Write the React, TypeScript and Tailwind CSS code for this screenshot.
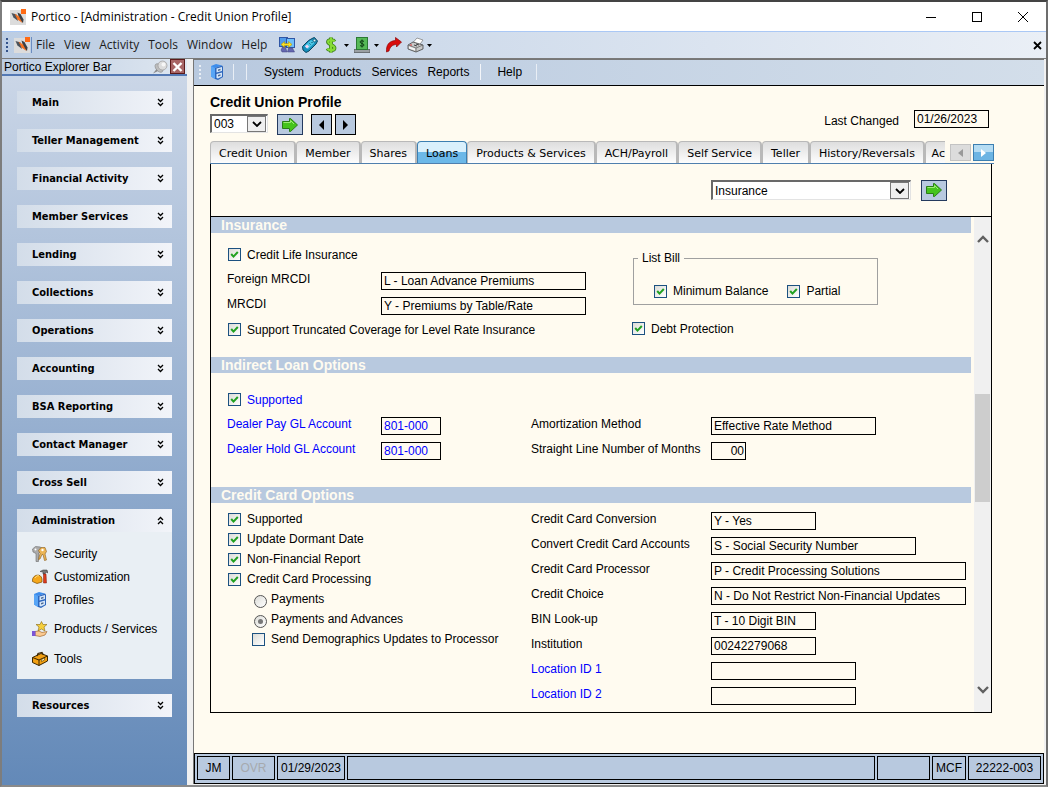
import { useState } from "react";
import type { ReactNode } from "react";

const menus = ["File", "View", "Activity", "Tools", "Window", "Help"];

const groups = [
  "Main",
  "Teller Management",
  "Financial Activity",
  "Member Services",
  "Lending",
  "Collections",
  "Operations",
  "Accounting",
  "BSA Reporting",
  "Contact Manager",
  "Cross Sell",
];

const tabs = [
  "Credit Union",
  "Member",
  "Shares",
  "Loans",
  "Products & Services",
  "ACH/Payroll",
  "Self Service",
  "Teller",
  "History/Reversals",
];

function PorticoLogo() {
  return (
    <svg viewBox="0 0 16 16" className="h-4 w-4 shrink-0">
      <rect y="1" width="16" height="15" fill="#dcdcdc" />
      <path d="M1.500 4l5 1.500L8 12 3.500 8.500z" fill="#4a525b" />
      <path d="M7.500 3.500l3 1.500 3 5.500-.5 3.500-3.500-3.500z" fill="#3a3f45" />
      <path d="M4.500 4.500l4.500 3 3.500 6.500-5-3.500z" fill="#f4701f" />
      <rect x="11" width="5" height="5" fill="#ff6a13" />
    </svg>
  );
}

function NetworkIcon() {
  return (
    <svg viewBox="0 0 16 16" className="h-4 w-4">
      <rect x=".5" y=".5" width="8" height="9" fill="#4f9bea" stroke="#2f56a5" />
      <rect x="7.500" y="1.500" width="8" height="9" fill="#6fc0fb" stroke="#2f56a5" />
      <path d="M2 13l1.500-3h3L8 15H3zM8.500 15l1-4h4l2 4z" fill="#6468b0" stroke="#3c3f7d" strokeWidth=".5" />
      <path d="M2 7.500L5.500 4.500v2h4v-2L13 7.500l-3.500 3v-2h-4v2z" fill="#ffe11f" stroke="#a68a00" strokeWidth=".5" />
    </svg>
  );
}

function TagIcon() {
  return (
    <svg viewBox="0 0 16 16" className="h-4 w-4">
      <path d="M.5 9.500l6-6L11 1l1.500-.5L15.500 4 14 7l-7 7-3 1.500L1 13z" fill="#1590bd" stroke="#0c4663" />
      <path d="M2.500 9L9 3l3.500 3L6 12z" fill="#4cc6e4" />
      <circle cx="12.500" cy="3.500" r="1.300" fill="#d9f4fb" stroke="#0c4663" strokeWidth=".6" />
      <path d="M3 9.500l2-2 2 2-2 2z" fill="#f7d5f2" />
      <path d="M7.500 6.500l1 1M9.500 5l1 1" stroke="#0c4663" />
    </svg>
  );
}

function DollarIcon() {
  return (
    <svg viewBox="0 0 12 16" className="h-4 w-3">
      <path d="M9.500 4.500C8.500 2.500 3 2.500 3 5s6.500 3 6.500 6-6 2.500-7 .5M6 .5v15" fill="none" stroke="#3c7d1a" strokeWidth="3.800" />
      <path d="M9.500 4.500C8.500 2.500 3 2.500 3 5s6.500 3 6.500 6-6 2.500-7 .5M6 .5v15" fill="none" stroke="#86dc35" strokeWidth="2.200" />
    </svg>
  );
}

function CashIcon() {
  return (
    <svg viewBox="0 0 16 16" className="h-4 w-4">
      <path d="M0 12.500h16v3H0z" fill="#9a9fa3" stroke="#4c5053" strokeWidth=".7" />
      <rect x="2.500" y=".5" width="11" height="12" fill="#55b957" stroke="#2b7a34" />
      <path d="M10 4.500C9 3.500 6 3.500 6 5s4 1.500 4 3-3 1.500-4 .5M8 2.500v8" fill="none" stroke="#0b3a12" />
    </svg>
  );
}

function RedArrowIcon() {
  return (
    <svg viewBox="0 0 16 16" className="h-4 w-4">
      <path d="M.5 15C0 8 3 4 9.500 3.500V.5L15.500 5l-5 5V7.500C6.500 7.500 4 10 3 14z" fill="#d90b0b" stroke="#8c0707" strokeWidth=".7" />
    </svg>
  );
}

function PrinterIcon() {
  return (
    <svg viewBox="0 0 17 16" className="h-4 w-[17px]">
      <path d="M6 5.500l4-4.500 6 2-3.500 5z" fill="#fff" stroke="#777" strokeWidth=".7" />
      <path d="M1 8l5-3 10 3v4l-7 3-8-3z" fill="#c9c9c9" stroke="#444" strokeWidth=".8" />
      <path d="M1 8l8 3 7-3M9 11v4" fill="none" stroke="#666" strokeWidth=".8" />
      <path d="M2 9.500l6 2v2l-6-2z" fill="#f5f5f5" />
      <path d="M7 8l3 1M9 7l3 1" stroke="#444" />
      <circle cx="4" cy="8" r=".8" fill="#d22" />
    </svg>
  );
}

function CabinetIcon() {
  return (
    <svg viewBox="0 0 16 16" className="h-4 w-4 shrink-0">
      <path d="M2 2l5-2 6 1.500L6 4v11l-4-2.500z" fill="#3c8ceb" />
      <path d="M6 4l7-2.500 1 1V13l-5 3-3-1z" fill="#2c66bd" />
      <path d="M2 2l4 2v11l-4-2.500z" fill="#57a5f6" />
      <path d="M7.500 4.500L13 3v4l-5.500 1.500zM7.500 10L13 8.500v4L9 14.500 7.500 14z" fill="#d5e6f8" />
      <path d="M9 5.500l2.500-.7v1.500L9 7zM9 11l2.500-.7v1.500L9 12.500z" fill="#4d6a95" />
    </svg>
  );
}

function KeysIcon() {
  return (
    <svg viewBox="0 0 16 16" className="h-4 w-4 shrink-0">
      <path d="M.5 3l3-2.500 5 .5 1 4-3 2v8.500H4V7.500L1 6z" fill="#ababab" stroke="#6c6c6c" strokeWidth=".6" />
      <path d="M6.500 4.500l2.500-3h4l1.500 4L13 8l1.500 6-2 .5-1.500-6h-1l-2 4.500-1.500.5 1.500-6z" fill="#ebb556" stroke="#8a5a17" strokeWidth=".6" />
      <circle cx="10.500" cy="4" r="1.200" fill="#fff" />
      <circle cx="3.500" cy="3.500" r="1" fill="#fff" />
    </svg>
  );
}

function HardHatIcon() {
  return (
    <svg viewBox="0 0 16 16" className="h-4 w-4 shrink-0">
      <path d="M8 2.500L11 1h4l1 3-2-1-1 2h-2V3z" fill="#777" stroke="#333" strokeWidth=".5" />
      <path d="M11.500 5h2.500l.5 9h-3z" fill="#dd3a1b" stroke="#7d1b0a" strokeWidth=".5" />
      <path d="M.5 11c0-5 8.500-7.500 9.500-1v3l-5 1.500-4.500-2z" fill="#f5a81c" stroke="#7a4a00" strokeWidth=".7" />
      <path d="M3 9c1-2 3-3 4-2" fill="none" stroke="#ffe28a" />
    </svg>
  );
}

function StarHandIcon() {
  return (
    <svg viewBox="0 0 16 16" className="h-4 w-4 shrink-0">
      <path d="M9.500.5L11 3.500h4l-3 2.500 1 4-3.500-2L6 10l1-4-3-2.500h4z" fill="#f6cf3c" stroke="#8a6a12" strokeWidth=".6" />
      <path d="M3 10.500L7 10l3 1.500 5-1L13 14l-5 1.500-5-1z" fill="#fbc98f" stroke="#96591b" strokeWidth=".6" />
      <rect y="10" width="3.500" height="5" fill="#7b55d6" />
    </svg>
  );
}

function ToolboxIcon() {
  return (
    <svg viewBox="0 0 16 16" className="h-4 w-4 shrink-0">
      <path d="M.5 6.500L9 2.500 15.500 5v5L7 14.500l-6.500-3z" fill="#f2a012" stroke="#3c2600" />
      <path d="M.5 6.500L7 9l8.500-4M7 9v5.500" fill="none" stroke="#3c2600" />
      <path d="M5 5l1-2.500 4-1L11.500 4" fill="none" stroke="#3c2600" strokeWidth="1.200" />
      <path d="M9.500 8.500l3-1.500v2l-3 1.500z" fill="#fff0a8" stroke="#3c2600" strokeWidth=".5" />
    </svg>
  );
}

function PinIcon() {
  return (
    <svg viewBox="0 0 15 14" className="h-3.5 w-[15px]">
      <path d="M0 13.500L4 8.500l2 2z" fill="#888" />
      <ellipse cx="6" cy="8" rx="3" ry="5" transform="rotate(-40 6 8)" fill="#bdbdbd" stroke="#888" strokeWidth=".6" />
      <circle cx="9.500" cy="5.500" r="4.500" fill="#dcdcdc" stroke="#999" strokeWidth=".7" />
      <circle cx="10.500" cy="4.500" r="2" fill="#f6f6f6" />
    </svg>
  );
}

function Chevrons({ up = false }: { up?: boolean }) {
  return (
    <svg viewBox="0 0 7 9" className="h-[9px] w-[7px]">
      {up ? (
        <path d="M1 4l2.500-2.500L6 4M1 8l2.500-2.500L6 8" fill="none" stroke="#000" strokeWidth="1.300" />
      ) : (
        <path d="M1 1l2.500 2.500L6 1M1 5l2.500 2.500L6 5" fill="none" stroke="#000" strokeWidth="1.300" />
      )}
    </svg>
  );
}

function Caret() {
  return (
    <svg viewBox="0 0 5 3" className="h-[3px] w-[5px]">
      <path d="M0 0h5L2.500 3z" fill="#000" />
    </svg>
  );
}

function GoButton({ label }: { label: string }) {
  return (
    <button
      aria-label={label}
      className="flex h-[21px] w-[26px] items-center justify-center border border-[#243a5e] bg-[#b8c9df]"
    >
      <svg viewBox="0 0 16 14" className="h-3.5 w-4">
        <path d="M.5 3.500h7v-3h1L15.500 7l-7 6.500h-1v-3h-7z" fill="#45c41c" stroke="#2a7d17" />
        <path d="M1.500 4.500h7v-2L12 6" fill="none" stroke="#9cec74" />
      </svg>
    </button>
  );
}

function Dropdown({ label, options, className }: { label: string; options: string[]; className: string }) {
  return (
    <span className={"grid border-t-2 border-l-2 border-r border-b border-t-[#696969] border-l-[#696969] border-r-[#e3e3e3] border-b-[#e3e3e3] bg-white " + className}>
      <select aria-label={label} className="appearance-none bg-white px-0.5 text-black outline-none [grid-area:1/1]">
        {options.map((o) => (
          <option key={o}>{o}</option>
        ))}
      </select>
      <span className="pointer-events-none mr-px flex w-[19px] items-center justify-center justify-self-end border border-[#777] bg-[#efefef] [grid-area:1/1]">
        <svg viewBox="0 0 10 6" className="h-1.5 w-2.5">
          <path d="M1 1l4 4 4-4" fill="none" stroke="#000" strokeWidth="1.800" />
        </svg>
      </span>
    </span>
  );
}

function Check({ label, checked = true, blue = false }: { label: string; checked?: boolean; blue?: boolean }) {
  return (
    <label className={blue ? "flex items-center gap-1.5 text-[#0000ff]" : "flex items-center gap-1.5"}>
      <span className="grid place-items-center">
        <input
          type="checkbox"
          defaultChecked={checked}
          className="peer h-[13px] w-[13px] appearance-none border border-[#1c5180] bg-linear-to-br from-[#dcdcd7] to-white [grid-area:1/1]"
        />
        <svg viewBox="0 0 9 9" className="pointer-events-none hidden h-[9px] w-[9px] [grid-area:1/1] peer-checked:block">
          <path d="M1.200 4l2.300 2.600L7.800 2" fill="none" stroke="#21a121" strokeWidth="2" />
        </svg>
      </span>
      {label}
    </label>
  );
}

function Radio({ label, checked = false }: { label: string; checked?: boolean }) {
  return (
    <label className="flex h-5 items-center gap-1">
      <span className="grid place-items-center pt-1">
        <input
          type="radio"
          name="processing"
          defaultChecked={checked}
          className="peer h-[13px] w-[13px] appearance-none rounded-full border border-[#555] bg-linear-to-br from-[#dcdcd7] to-white [grid-area:1/1]"
        />
        <span className="pointer-events-none hidden h-[5px] w-[5px] rounded-full bg-[#777] [grid-area:1/1] peer-checked:block" />
      </span>
      {label}
    </label>
  );
}

type FieldProps = {
  label: string;
  value?: string;
  labelWidth: string;
  width: string;
  blue?: boolean;
  right?: boolean;
};

function Field({ label, value = "", labelWidth, width, blue = false, right = false }: FieldProps) {
  return (
    <label className={"flex h-[25px] items-start " + (blue ? "text-[#0000ff]" : "text-black")}>
      <span className={"shrink-0 leading-6 " + labelWidth}>{label}</span>
      <input
        readOnly
        defaultValue={value}
        className={"mt-[5px] h-[18px] border border-black bg-[#fffbf0] outline-none " + width + (right ? " pr-px text-right" : " px-0.5")}
      />
    </label>
  );
}

function SectionTitle({ children }: { children: ReactNode }) {
  return (
    <h2 className="h-4 bg-[#b8c9df] pl-2.5 text-[14px] leading-4 font-bold text-[#fffbf0]">{children}</h2>
  );
}

function GroupHeader({ name, open = false }: { name: string; open?: boolean }) {
  return (
    <button className="flex h-[23px] w-full items-center justify-between bg-linear-to-r from-[#d3dde9] to-[#f2f4f9] pr-2 pl-[15px] font-['DejaVu_Sans_Condensed','DejaVu_Sans',sans-serif] text-[11px] font-bold">
      {name}
      <Chevrons up={open} />
    </button>
  );
}

function AdminLink({ icon, name }: { icon: ReactNode; name: string }) {
  return (
    <a href="#" className="flex h-[23px] items-center gap-1.5 whitespace-nowrap">
      {icon}
      {name}
    </a>
  );
}

function TitleBar() {
  return (
    <header className="flex h-[30px] items-center border-b border-[#aac8f5] bg-white pr-4 pl-2 font-['Open_Sans',sans-serif] text-[12px]">
      <PorticoLogo />
      <h1 className="ml-[5px]">Portico - [Administration - Credit Union Profile]</h1>
      <div className="ml-auto flex items-center gap-8">
        <button aria-label="Minimize">
          <svg viewBox="0 0 14 12" className="h-3 w-3.5">
            <path d="M2 6.500h10" stroke="#000" />
          </svg>
        </button>
        <button aria-label="Maximize">
          <svg viewBox="0 0 14 12" className="h-3 w-3.5">
            <rect x="2.500" y="1.500" width="9" height="9" fill="none" stroke="#000" />
          </svg>
        </button>
        <button aria-label="Close">
          <svg viewBox="0 0 14 12" className="h-3 w-3.5">
            <path d="M2 1l10 10M12 1L2 11" stroke="#000" />
          </svg>
        </button>
      </div>
    </header>
  );
}

function MenuBar() {
  return (
    <nav className="flex h-[27px] items-center border-b border-[#7a7a7a] bg-linear-to-r from-[#bccde3] to-[#eaeff6] pl-1">
      <span className="h-3.5 border-l-2 border-dotted border-[#33528a]" />
      <span className="ml-1.5 flex border-r border-[#6b8cc0] pr-px">
        <PorticoLogo />
      </span>
      <div className="ml-1 flex gap-[9px] font-['Open_Sans',sans-serif] text-[12px] text-[#1c1c1c]">
        {menus.map((m) => (
          <button key={m}>{m}</button>
        ))}
      </div>
      <div className="ml-3 flex items-center gap-[7px]">
        <button aria-label="Network">
          <NetworkIcon />
        </button>
        <button aria-label="Tag">
          <TagIcon />
        </button>
        <button aria-label="Money" className="flex items-center gap-[7px]">
          <DollarIcon />
          <Caret />
        </button>
        <button aria-label="Cash" className="-ml-0.5 flex items-center gap-1">
          <CashIcon />
          <Caret />
        </button>
        <button aria-label="Forward">
          <RedArrowIcon />
        </button>
        <button aria-label="Print" className="-ml-0.5 flex items-center gap-[3px]">
          <PrinterIcon />
          <Caret />
        </button>
      </div>
      <button aria-label="Close document" className="mr-1 ml-auto">
        <svg viewBox="0 0 9 9" className="h-[9px] w-[9px]">
          <path d="M1 1l7 7M8 1L1 8" stroke="#000" strokeWidth="1.800" />
        </svg>
      </button>
    </nav>
  );
}

function ExplorerBar() {
  return (
    <aside className="flex w-[185px] shrink-0 flex-col bg-linear-to-b from-[#cdd8e8] to-[#6389b8]">
      <div className="flex h-[17px] items-center border-b-2 border-[#5479b4] bg-linear-to-r from-[#bccde3] to-[#dfe7f0] pl-0.5">
        <span>Portico Explorer Bar</span>
        <button aria-label="Pin" className="ml-auto">
          <PinIcon />
        </button>
        <button aria-label="Close explorer" className="mr-0.5 ml-0.5 flex h-[15px] w-[15px] items-center justify-center border border-[#5c1a1a] bg-[#a86565]">
          <svg viewBox="0 0 11 10" className="h-2.5 w-[11px]">
            <path d="M1.500 1l8 8M9.500 1l-8 8" stroke="#fff" strokeWidth="2.400" />
          </svg>
        </button>
      </div>
      <div className="flex flex-col gap-[15px] px-[15px] pt-[15px]">
        {groups.map((g) => (
          <GroupHeader key={g} name={g} />
        ))}
        <section className="bg-[#e9eff4]">
          <GroupHeader name="Administration" open />
          <div className="flex flex-col px-[15px] pt-2.5 pb-[9px]">
            <AdminLink icon={<KeysIcon />} name="Security" />
            <AdminLink icon={<HardHatIcon />} name="Customization" />
            <AdminLink icon={<CabinetIcon />} name="Profiles" />
            <div className="mt-1.5 flex flex-col gap-[7px]">
              <AdminLink icon={<StarHandIcon />} name="Products / Services" />
              <AdminLink icon={<ToolboxIcon />} name="Tools" />
            </div>
          </div>
        </section>
        <GroupHeader name="Resources" />
      </div>
    </aside>
  );
}

function Toolbar() {
  return (
    <nav className="flex h-[26px] shrink-0 items-center border-b border-black bg-linear-to-r from-[#b8c9df] to-[#d3deea] pb-0.5 pl-[5px]">
      <span className="h-3.5 border-l-2 border-dotted border-[#e9eef5]" />
      <button aria-label="Profiles" className="ml-2">
        <CabinetIcon />
      </button>
      <span className="ml-2 h-4 border-l border-[#e9eef5]" />
      <span className="ml-3 h-4 border-l border-[#e9eef5]" />
      <div className="ml-[17px] flex gap-2.5">
        <button>System</button>
        <button>Products</button>
        <button>Services</button>
        <button>Reports</button>
      </div>
      <span className="ml-[11px] h-4 border-l border-[#f4f6fa]" />
      <button className="ml-4">Help</button>
      <span className="ml-3.5 h-4 border-l border-[#e9eef5]" />
    </nav>
  );
}

function ProfileHeader() {
  return (
    <div className="flex items-start justify-between pt-[7px] pr-[3px]">
      <div>
        <h2 className="text-[14px] leading-[18px] font-bold">Credit Union Profile</h2>
        <div className="mt-[3px] flex items-start">
          <Dropdown label="Profile number" options={["003"]} className="h-[19px] w-[58px]" />
          <span className="ml-[9px] flex">
            <GoButton label="Load profile" />
          </span>
          <button aria-label="Previous" className="ml-2 flex h-[21px] w-[21px] items-center justify-center border border-black bg-[#b8c9df]">
            <svg viewBox="0 0 5 10" className="h-2.5 w-[5px]">
              <path d="M5 0v10L0 5z" />
            </svg>
          </button>
          <button aria-label="Next" className="ml-[3px] flex h-[21px] w-[21px] items-center justify-center border border-black bg-[#b8c9df]">
            <svg viewBox="0 0 5 10" className="h-2.5 w-[5px]">
              <path d="M0 0v10l5-5z" />
            </svg>
          </button>
        </div>
      </div>
      <label className="flex pt-[17px]">
        <span className="pt-0.5 leading-[18px]">Last Changed</span>
        <input readOnly defaultValue="01/26/2023" className="ml-[15px] h-[18px] w-[75px] border border-black bg-[#fffbf0] px-0.5 outline-none" />
      </label>
    </div>
  );
}

function TabStrip() {
  const [active, setActive] = useState("Loans");

  return (
    <div className="mt-1.5 -mr-0.5 flex items-end border-b border-[#4f7fae]">
      <div className="flex h-[22px] min-w-0 flex-1 font-['DejaVu_Sans',sans-serif] text-[11px]">
        {tabs.map((t) => (
          <button
            key={t}
            onClick={() => setActive(t)}
            className={
              t === active
                ? "shrink-0 rounded-t-[4px] border border-b-0 border-[#3c7fb1] bg-linear-to-b from-[#d9f0fc] from-50% to-[#6cb8e8] to-50% px-2 pt-0.5"
                : "shrink-0 rounded-t-[4px] border border-r-2 border-b-0 border-[#b9b9b9] bg-linear-to-b from-[#dedede] to-[#fdfdfd] px-2 pt-0.5 first:pr-[7px]"
            }
          >
            {t}
          </button>
        ))}
        <button className="min-w-0 flex-1 rounded-tl-[4px] border-t border-l border-[#b9b9b9] bg-linear-to-b from-[#dedede] to-[#fdfdfd] pt-0.5 text-right">
          Ac
        </button>
      </div>
      <div className="mb-0.5 ml-[5px] flex gap-0.5">
        <button aria-label="Scroll tabs left" className="flex h-[17px] w-[21px] items-center justify-center border border-[#c3c3c3] bg-[#dcdcdc]">
          <svg viewBox="0 0 5 8" className="h-2 w-[5px]">
            <path d="M5 0v8L0 4z" fill="#999" />
          </svg>
        </button>
        <button aria-label="Scroll tabs right" className="flex h-[17px] w-[21px] items-center justify-center border border-[#3c7fb1] bg-linear-to-b from-[#b5dcf3] from-50% to-[#6cb4e3] to-50%">
          <svg viewBox="0 0 5 8" className="h-2 w-[5px]">
            <path d="M0 0v8l5-4z" fill="#fff" />
          </svg>
        </button>
      </div>
    </div>
  );
}

function InsuranceSection() {
  return (
    <section>
      <SectionTitle>Insurance</SectionTitle>
      <div className="flex pt-[9px] pb-[15px] pl-4">
        <div className="w-[405px] shrink-0">
          <div className="flex h-[25px] pl-px">
            <Check label="Credit Life Insurance" />
          </div>
          <Field label="Foreign MRCDI" value="L - Loan Advance Premiums" labelWidth="w-[154px]" width="w-[205px]" />
          <Field label="MRCDI" value="Y - Premiums by Table/Rate" labelWidth="w-[154px]" width="w-[205px]" />
          <div className="flex h-[25px] pl-px">
            <Check label="Support Truncated Coverage for Level Rate Insurance" />
          </div>
        </div>
        <div className="pt-2">
          <fieldset className="ml-px h-[55px] w-[245px] border border-[#a0a0a0] pl-5">
            <legend className="-ml-4 px-1 leading-4">List Bill</legend>
            <div className="flex gap-[19px] pt-[17px]">
              <Check label="Minimum Balance" />
              <Check label="Partial" />
            </div>
          </fieldset>
          <div className="mt-[11px] flex h-[25px]">
            <Check label="Debt Protection" />
          </div>
        </div>
      </div>
    </section>
  );
}

function IndirectLoanSection() {
  return (
    <section>
      <SectionTitle>Indirect Loan Options</SectionTitle>
      <div className="flex pt-3.5 pb-[25px] pl-4">
        <div className="w-[304px] shrink-0">
          <div className="flex h-[25px] pl-px">
            <Check label="Supported" blue />
          </div>
          <Field label="Dealer Pay GL Account" value="801-000" labelWidth="w-[154px]" width="w-[60px]" blue />
          <Field label="Dealer Hold GL Account" value="801-000" labelWidth="w-[154px]" width="w-[60px]" blue />
        </div>
        <div className="pt-[25px]">
          <Field label="Amortization Method" value="Effective Rate Method" labelWidth="w-[180px]" width="w-[165px]" />
          <Field label="Straight Line Number of Months" value="00" labelWidth="w-[180px]" width="w-[35px]" right />
        </div>
      </div>
    </section>
  );
}

function CreditCardSection() {
  return (
    <section>
      <SectionTitle>Credit Card Options</SectionTitle>
      <div className="flex pt-1 pb-[5px] pl-4">
        <div className="flex w-[304px] shrink-0 flex-col pt-0.5 pl-px">
          <div className="flex h-5">
            <Check label="Supported" />
          </div>
          <div className="flex h-5">
            <Check label="Update Dormant Date" />
          </div>
          <div className="flex h-5">
            <Check label="Non-Financial Report" />
          </div>
          <div className="flex h-5">
            <Check label="Credit Card Processing" />
          </div>
          <div className="pl-[26px]">
            <Radio label="Payments" />
            <Radio label="Payments and Advances" checked />
          </div>
          <div className="flex h-5 pl-6">
            <Check label="Send Demographics Updates to Processor" checked={false} />
          </div>
        </div>
        <div>
          <Field label="Credit Card Conversion" value="Y - Yes" labelWidth="w-[180px]" width="w-[105px]" />
          <Field label="Convert Credit Card Accounts" value="S - Social Security Number" labelWidth="w-[180px]" width="w-[205px]" />
          <Field label="Credit Card Processor" value="P - Credit Processing Solutions" labelWidth="w-[180px]" width="w-[255px]" />
          <Field label="Credit Choice" value="N - Do Not Restrict Non-Financial Updates" labelWidth="w-[180px]" width="w-[255px]" />
          <Field label="BIN Look-up" value="T - 10 Digit BIN" labelWidth="w-[180px]" width="w-[105px]" />
          <Field label="Institution" value="00242279068" labelWidth="w-[180px]" width="w-[105px]" />
          <Field label="Location ID 1" labelWidth="w-[180px]" width="w-[145px]" blue />
          <Field label="Location ID 2" labelWidth="w-[180px]" width="w-[145px]" blue />
        </div>
      </div>
    </section>
  );
}

function ScrollBar() {
  return (
    <div className="flex w-[17px] flex-col items-stretch bg-[#f0f0f0] px-px py-4">
      <button aria-label="Scroll up" className="flex h-3 items-center justify-center">
        <svg viewBox="0 0 12 8" className="h-2 w-3">
          <path d="M1 7l5-5 5 5" fill="none" stroke="#606060" strokeWidth="2.400" />
        </svg>
      </button>
      <span className="grow-[149]" />
      <button aria-label="Scroll thumb" className="grow-[109] bg-[#cdcdcd]" />
      <span className="grow-[182]" />
      <button aria-label="Scroll down" className="flex h-3 items-center justify-center">
        <svg viewBox="0 0 12 8" className="h-2 w-3">
          <path d="M1 1l5 5 5-5" fill="none" stroke="#606060" strokeWidth="2.400" />
        </svg>
      </button>
    </div>
  );
}

function StatusBar() {
  return (
    <footer className="flex h-[31px] shrink-0 gap-[2px] border border-black bg-[#b8c9df] p-0.5 pb-[3px]">
      <span className="flex w-[33px] items-center justify-center border border-black">JM</span>
      <span className="flex w-[43px] items-center justify-center border border-black text-[#a6a9ae]">OVR</span>
      <span className="flex w-[68px] items-center justify-center border border-black">01/29/2023</span>
      <span className="flex-1 border border-black" />
      <span className="w-[53px] border border-black" />
      <span className="flex w-[34px] items-center justify-center border border-black">MCF</span>
      <span className="flex w-[73px] items-center justify-center border border-black">22222-003</span>
    </footer>
  );
}

export default function App() {
  return (
    <div className="flex min-h-screen flex-col border-t-2 border-r-2 border-b-2 border-l-2 border-t-[#444] border-r-[#6d6d6d] border-b-[#8a8a8a] border-l-[#7d7d7d] bg-[#f0f0f0] font-['Liberation_Sans',Arial,sans-serif] text-[12px] leading-4 text-black">
      <TitleBar />
      <MenuBar />
      <div className="flex flex-1">
        <ExplorerBar />
        <div className="mr-0.5 mb-px ml-1.5 flex min-w-0 flex-1 flex-col border-t border-l border-[#777] bg-[#fffbf0]">
          <Toolbar />
          <main className="flex-1 pr-[52px] pb-10 pl-4">
            <ProfileHeader />
            <TabStrip />
            <div className="border-r border-b border-l border-black">
              <div className="flex h-[53px] items-center justify-end border-b border-black pr-11">
                <Dropdown label="Loan section" options={["Insurance"]} className="h-5 w-[200px]" />
                <span className="ml-2.5 flex">
                  <GoButton label="Go to section" />
                </span>
              </div>
              <div className="flex">
                <div className="mr-[3px] min-w-0 flex-1">
                  <InsuranceSection />
                  <IndirectLoanSection />
                  <CreditCardSection />
                </div>
                <ScrollBar />
              </div>
            </div>
          </main>
          <StatusBar />
        </div>
      </div>
    </div>
  );
}
